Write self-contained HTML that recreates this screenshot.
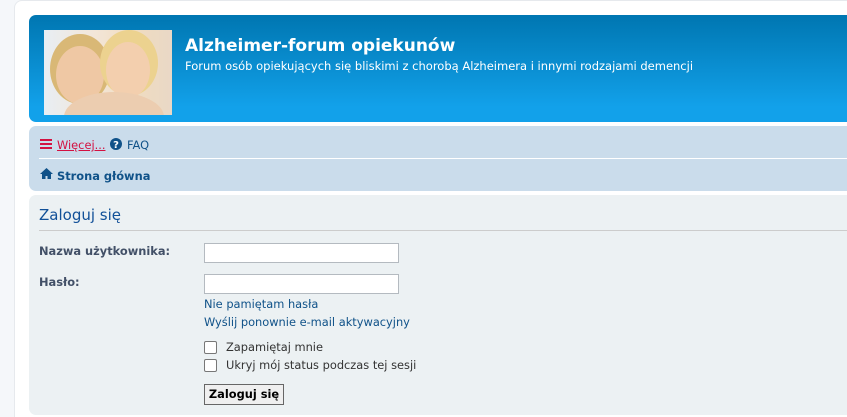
<!DOCTYPE html>
<html style="overflow:hidden;height:417px"><head><meta charset="utf-8"><style>
*{box-sizing:border-box;margin:0;padding:0}
body{width:847px;height:417px;overflow:hidden;background:#f5f7fa;font-family:"DejaVu Sans",Verdana,sans-serif;font-size:11.4px;color:#333;position:relative}
.wrap{position:absolute;left:14px;top:0;width:840px;height:417px;background:#fff;border:1px solid #e6e9ed;border-bottom:none;border-radius:8px 8px 0 0}
.hdr{position:absolute;left:29px;top:15px;width:818px;height:107px;border-radius:7px 0 0 7px;background:linear-gradient(#0076b1 0,#12a1ea 92px);}
.img{position:absolute;left:44px;top:30px;width:128px;height:85px;background:linear-gradient(90deg,#e8eef4,#f3e6d8 40%,#f0dcc0 70%,#e9d8c6);overflow:hidden}
.img div{position:absolute;border-radius:50%}
.t1{position:absolute;left:185px;top:36px;font-size:17px;font-weight:bold;color:#fff}
.t2{position:absolute;left:185px;top:59px;font-size:11.5px;color:#fff}
.nav{position:absolute;left:29px;top:126px;width:818px;height:65px;background:#cadceb;border-radius:7px 0 0 7px}
.nav .l{position:absolute;left:10px;right:0;top:32px;height:1px;background:#fff}
.more{position:absolute;top:138px;color:#d31141;text-decoration:underline}
.faq{position:absolute;top:138px;color:#105289}
.home{position:absolute;top:169px;color:#105289;font-weight:bold}
.panel{position:absolute;left:29px;top:195px;width:818px;height:220px;background:#ecf1f3;border-radius:7px 0 0 7px}
h2{position:absolute;left:39px;top:206px;font-weight:normal;font-size:15px;color:#115098;font-family:"DejaVu Sans",sans-serif}
.hr{position:absolute;left:39px;top:230px;width:808px;height:1px;background:#ccc}
.lbl{position:absolute;left:39px;font-weight:bold;color:#425067}
.inp{position:absolute;left:204px;width:195px;height:20px;background:#fff;border:1px solid #b4bac0}
.lnk{position:absolute;left:204px;color:#105289}
.cb{position:absolute;left:204px;width:13px;height:13px;border:1px solid #777;border-radius:2px;background:#fff}
.ct{position:absolute;left:226px;color:#333}
.btn{position:absolute;left:204px;top:384px;width:80px;height:21px;border:1px solid #666;background:#efefef;font-weight:bold;font-size:11.4px;color:#000;text-align:center;line-height:19px}
</style></head><body>
<div class="wrap"></div>
<div class="hdr"></div>
<div class="img">
<div style="left:6px;top:4px;width:60px;height:70px;background:#d9b876"></div>
<div style="left:12px;top:16px;width:48px;height:58px;background:#efc8a4"></div>
<div style="left:56px;top:0px;width:58px;height:66px;background:#ecd28f"></div>
<div style="left:62px;top:12px;width:44px;height:56px;background:#f3cfae"></div>
<div style="left:20px;top:62px;width:100px;height:50px;background:#eccdb0"></div>
</div>
<div class="t1">Alzheimer-forum opiekunów</div>
<div class="t2">Forum osób opiekujących się bliskimi z chorobą Alzheimera i innymi rodzajami demencji</div>
<div class="nav"><div class="l"></div></div>
<svg style="position:absolute;left:40px;top:139px" width="12" height="10"><rect y="0" width="12" height="2" fill="#d31141"/><rect y="4" width="12" height="2" fill="#d31141"/><rect y="8" width="12" height="2" fill="#d31141"/></svg>
<div class="more" style="left:57px">Więcej...</div>
<svg style="position:absolute;left:110px;top:138px" width="12" height="12"><circle cx="6" cy="6" r="6" fill="#105289"/><text x="6" y="10" font-size="10" font-weight="bold" fill="#fff" text-anchor="middle" font-family="DejaVu Sans">?</text></svg>
<div class="faq" style="left:127px">FAQ</div>
<svg style="position:absolute;left:40px;top:168px" width="13" height="11"><path d="M6.5 0L0 6h2v5h3.5V8h2v3H11V6h2z" fill="#105289"/></svg>
<div class="home" style="left:57px">Strona główna</div>
<div class="panel"></div>
<h2>Zaloguj się</h2>
<div class="hr"></div>
<div class="lbl" style="top:244px">Nazwa użytkownika:</div>
<div class="inp" style="top:243px"></div>
<div class="lbl" style="top:275px">Hasło:</div>
<div class="inp" style="top:274px"></div>
<div class="lnk" style="top:297px">Nie pamiętam hasła</div>
<div class="lnk" style="top:315px">Wyślij ponownie e-mail aktywacyjny</div>
<div class="cb" style="top:341px"></div><div class="ct" style="top:340px">Zapamiętaj mnie</div>
<div class="cb" style="top:359px"></div><div class="ct" style="top:358px">Ukryj mój status podczas tej sesji</div>
<div class="btn">Zaloguj się</div>
</body></html>
